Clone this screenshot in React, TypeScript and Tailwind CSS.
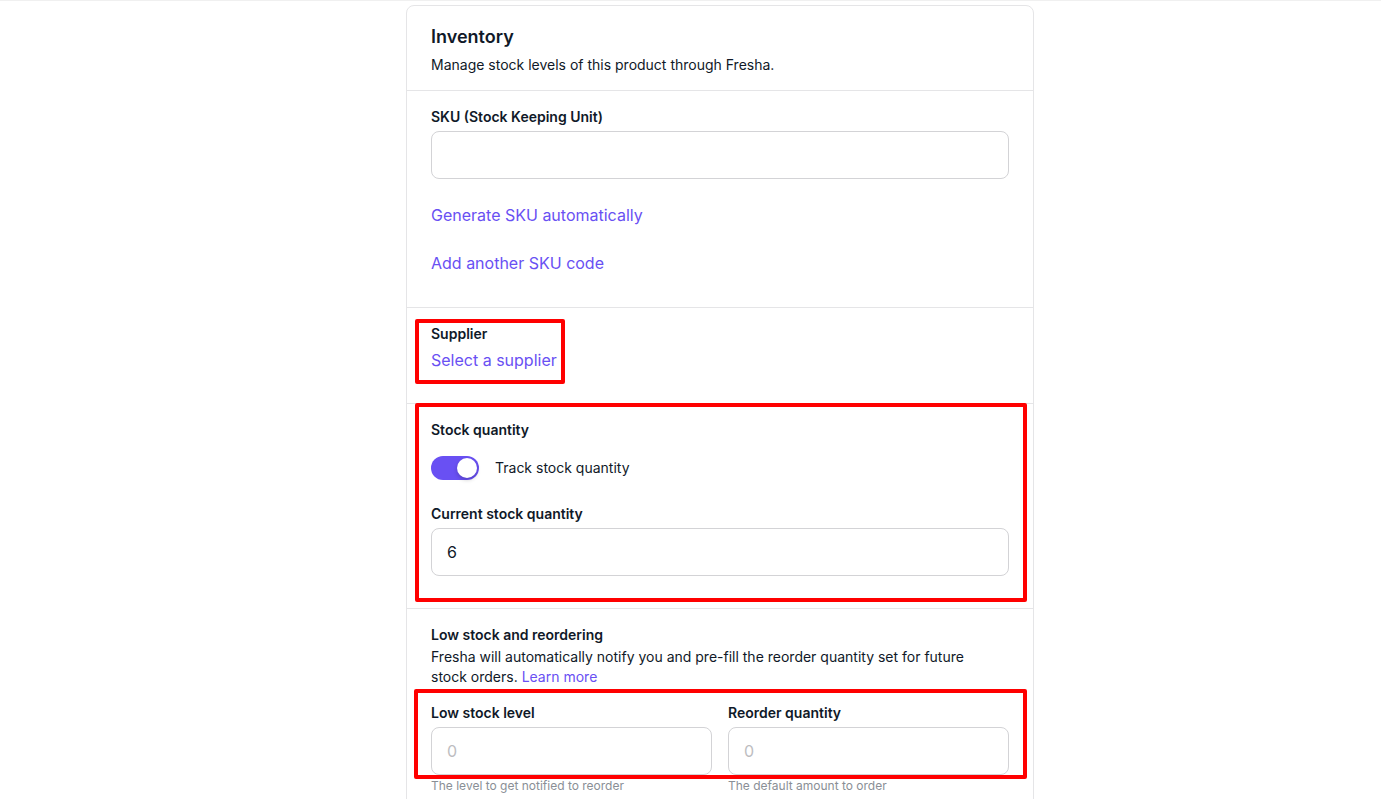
import React from 'react';

const font = { fontFamily: 'Inter, "Noto Sans", sans-serif' };

function Field({ value, placeholder }: { value?: string; placeholder?: string }) {
  return (
    <div className="h-12 w-full rounded-lg border border-[#d3d3d6] flex items-center pl-[15px] text-[16px]">
      {value ? (
        <span className="text-[#101928]">{value}</span>
      ) : (
        <span className="text-[#bdbdc1]">{placeholder}</span>
      )}
    </div>
  );
}

function Toggle() {
  return (
    <div className="relative h-6 w-12 rounded-full bg-[#6950f3]">
      <div className="absolute right-[2px] top-[2px] h-5 w-5 rounded-full bg-white shadow-[0_2px_4px_rgba(0,0,0,0.2)]" />
    </div>
  );
}

export default function App() {
  return (
    <div className="relative h-[799px] overflow-hidden bg-white border-t border-[#f0f0f0] text-[#101928]" style={font}>
      <div className="ml-[406px] mt-[4px] w-[628px] rounded-lg border border-[#e5e5e7]">
        {/* Header */}
        <div className="px-6 pt-[17px] pb-[15px] border-b border-[#e5e5e7]">
          <h2 className="text-[18px] leading-7 font-semibold">Inventory</h2>
          <p className="mt-1 text-[14px] leading-5">Manage stock levels of this product through Fresha.</p>
        </div>

        {/* SKU */}
        <div className="px-6 pt-4 pb-8 border-b border-[#e5e5e7]">
          <label className="block text-[14px] leading-5 font-semibold">SKU (Stock Keeping Unit)</label>
          <div className="mt-1">
            <Field />
          </div>
          <div className="mt-6 flex flex-col gap-6">
            <span className="text-[16px] leading-6 text-[#6950f3]">Generate SKU automatically</span>
            <span className="text-[16px] leading-6 text-[#6950f3]">Add another SKU code</span>
          </div>
        </div>

        {/* Supplier */}
        <div className="px-6 pt-4 pb-[31px] border-b border-[#e5e5e7]">
          <label className="block text-[14px] leading-5 font-semibold">Supplier</label>
          <span className="mt-1 block text-[16px] leading-6 text-[#6950f3]">Select a supplier</span>
        </div>

        {/* Stock quantity */}
        <div className="px-6 pt-4 pb-8 border-b border-[#e5e5e7]">
          <label className="block text-[14px] leading-5 font-semibold">Stock quantity</label>
          <div className="mt-4 flex items-center gap-4">
            <Toggle />
            <span className="text-[14px] leading-5">Track stock quantity</span>
          </div>
          <label className="mt-6 block text-[14px] leading-5 font-semibold">Current stock quantity</label>
          <div className="mt-1">
            <Field value="6" />
          </div>
        </div>

        {/* Low stock */}
        <div className="px-6 pt-4 pb-8">
          <h3 className="text-[14px] leading-5 font-semibold">Low stock and reordering</h3>
          <p className="mt-[2px] max-w-[560px] text-[14px] leading-5">
            Fresha will automatically notify you and pre-fill the reorder quantity set for future stock orders.{' '}
            <span className="text-[#6950f3]">Learn more</span>
          </p>
          <div className="mt-4 grid grid-cols-2 gap-4">
            <div>
              <label className="block text-[14px] leading-5 font-semibold">Low stock level</label>
              <div className="mt-1">
                <Field placeholder="0" />
              </div>
              <p className="mt-[3px] text-[12px] leading-4 text-[#8a8f96]">The level to get notified to reorder</p>
            </div>
            <div>
              <label className="block text-[14px] leading-5 font-semibold">Reorder quantity</label>
              <div className="mt-1">
                <Field placeholder="0" />
              </div>
              <p className="mt-[3px] text-[12px] leading-4 text-[#8a8f96]">The default amount to order</p>
            </div>
          </div>
        </div>
      </div>

      {/* Annotation boxes */}
      <div className="absolute left-[415px] top-[318px] h-[65px] w-[150px] rounded-[2px] border-4 border-[#ff0000]" />
      <div className="absolute left-[415px] top-[402px] h-[199px] w-[612px] rounded-[2px] border-4 border-[#ff0000]" />
      <div className="absolute left-[414px] top-[688px] h-[90px] w-[613px] rounded-[2px] border-4 border-[#ff0000]" />
    </div>
  );
}
